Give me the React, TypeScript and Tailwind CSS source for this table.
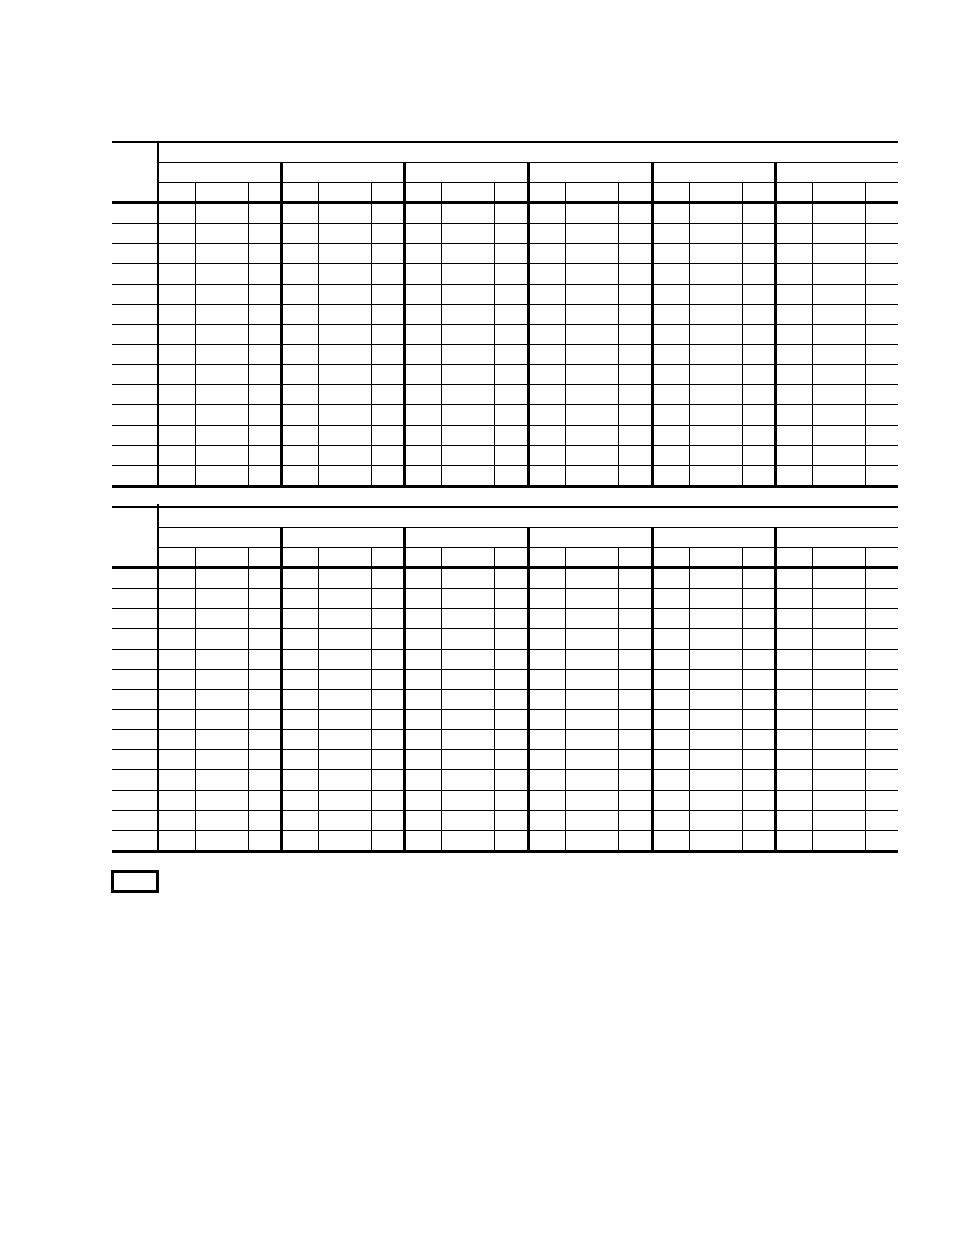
import React from "react";

const GROUPS = [0, 1, 2, 3, 4, 5];
const ROWS = Array.from({ length: 14 }, (_, i) => i);

function SubCells({ first }: { first: boolean }) {
  return (
    <>
      <div className={first ? "w-[36px] shrink-0" : "w-[35px] shrink-0"} />
      <div className="w-[53px] shrink-0 border-l border-black" />
      <div className="flex-1 border-l border-black" />
    </>
  );
}

function GroupRow({ withSubs, className }: { withSubs: boolean; className?: string }) {
  return (
    <div className={`flex ${className ?? ""}`}>
      {GROUPS.map((g) => (
        <div
          key={g}
          className={`flex flex-1 min-w-0 ${g === 0 ? "" : "border-l-[3px] border-black"}`}
        >
          {withSubs ? <SubCells first={g === 0} /> : null}
        </div>
      ))}
    </div>
  );
}

function Table({ overshoot }: { overshoot?: boolean }) {
  return (
    <div className="w-[786px]">
      {overshoot ? (
        <div className="h-[2px] flex">
          <div className="w-[45px]" />
          <div className="w-[2px] bg-black" />
        </div>
      ) : null}
      <div className="h-[2px] bg-black" />
      <div className="flex">
        <div className="w-[47px] shrink-0 border-r-2 border-black" />
        <div className="flex-1 flex flex-col">
          <div className="h-[20px] border-b border-black" />
          <GroupRow withSubs={false} className="h-[20px] border-b border-black" />
          <GroupRow withSubs className="h-[18px]" />
        </div>
      </div>
      <div className="h-[3px] bg-black" />
      <div className="h-[281px] flex flex-col">
        {ROWS.map((r) => (
          <div
            key={r}
            className={`flex flex-1 ${r < ROWS.length - 1 ? "border-b border-black" : ""}`}
          >
            <div className="w-[47px] shrink-0 border-r-2 border-black" />
            <GroupRow withSubs className="flex-1" />
          </div>
        ))}
      </div>
      <div className="h-[3px] bg-black" />
    </div>
  );
}

export default function App() {
  return (
    <div className="w-[954px] h-[1235px] bg-white pt-[141px] pl-[112px]">
      <Table />
      <div className="h-[16px]" />
      <Table overshoot />
      <div className="h-[17px]" />
      <div className="-ml-[1px] w-[48px] h-[23px] border-[3px] border-black" />
    </div>
  );
}
